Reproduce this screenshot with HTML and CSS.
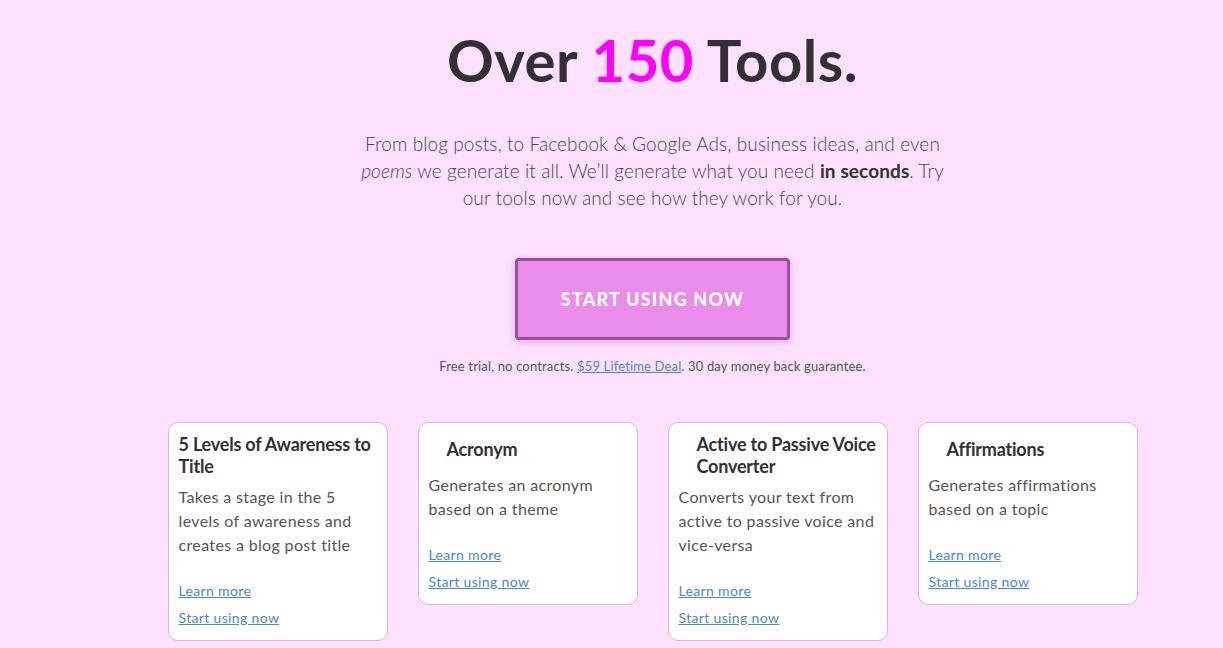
FILE: index.html
```html
<!DOCTYPE html>
<html lang="en">
<head>
<meta charset="utf-8">
<title>Over 150 Tools</title>
<link rel="stylesheet" href="styles.css">
</head>
<body>
<main class="page">
  <section class="hero">
    <h1 class="title">Over <span class="accent">150</span> Tools.</h1>
    <p class="lead">From blog posts, to Facebook &amp; Google Ads, business ideas, and even <em>poems</em> we generate it all. We’ll generate what you need <strong>in seconds</strong>. Try our tools now and see how they work for you.</p>
    <a class="cta" href="#">Start using now</a>
    <p class="fine">Free trial, no contracts. <a href="#">$59 Lifetime Deal</a>. 30 day money back guarantee.</p>
  </section>
  <section class="cards">
    <article class="card">
      <header class="card-head"><h2 class="card-title">5 Levels of Awareness to Title</h2></header>
      <p class="card-desc">Takes a stage in the 5 levels of awareness and creates a blog post title</p>
      <div class="card-links"><a href="#">Learn more</a><a href="#">Start using now</a></div>
    </article>
    <article class="card">
      <header class="card-head"><span class="icon"></span><h2 class="card-title">Acronym</h2></header>
      <p class="card-desc">Generates an acronym based on a theme</p>
      <div class="card-links"><a href="#">Learn more</a><a href="#">Start using now</a></div>
    </article>
    <article class="card">
      <header class="card-head"><span class="icon"></span><h2 class="card-title">Active to Passive Voice Converter</h2></header>
      <p class="card-desc">Converts your text from active to passive voice and vice-versa</p>
      <div class="card-links"><a href="#">Learn more</a><a href="#">Start using now</a></div>
    </article>
    <article class="card">
      <header class="card-head"><span class="icon"></span><h2 class="card-title">Affirmations</h2></header>
      <p class="card-desc">Generates affirmations based on a topic</p>
      <div class="card-links"><a href="#">Learn more</a><a href="#">Start using now</a></div>
    </article>
  </section>
</main>
</body>
</html>
```
FILE: styles.css
```css
* { box-sizing: border-box; }
html, body { margin: 0; padding: 0; }
body {
  background: #fde1fe;
  font-family: Lato, "Open Sans", sans-serif;
  color: #4a4448;
  overflow: hidden;
}
.page {
  padding-left: 82px;
}
.hero {
  display: flex;
  flex-direction: column;
  align-items: center;
  text-align: center;
  padding-top: 25px;
}
.title {
  margin: 0;
  font-size: 58px;
  line-height: 70px;
  font-weight: 700;
  color: #333033;
  letter-spacing: 0.5px;
}
.accent { color: #ff00ff; }
.lead {
  margin: 35px 0 0;
  width: 600px;
  font-size: 19px;
  line-height: 27px;
  font-weight: 300;
  color: #4d464b;
  letter-spacing: 0.1px;
}
.lead strong { font-weight: 700; color: #333033; }
.cta {
  margin-top: 47px;
  width: 275px;
  height: 82px;
  display: flex;
  align-items: center;
  justify-content: center;
  background: #ea8ce9;
  border: 3px solid #9c4f9d;
  border-radius: 4px;
  box-shadow: 0 2px 8px rgba(160, 80, 160, 0.35);
  color: #fff;
  text-decoration: none;
  text-transform: uppercase;
  font-size: 18px;
  font-weight: 900;
  letter-spacing: 1.2px;
}
.fine {
  margin: 17px 0 0;
  font-size: 13px;
  line-height: 18px;
  color: #555;
  letter-spacing: 0.15px;
}
.fine a { color: #4a86d8; }
.cards {
  display: flex;
  justify-content: center;
  align-items: flex-start;
  gap: 30px;
  margin-top: 47px;
}
.card {
  width: 220px;
  background: #fff;
  border: 1px solid #d9b7d9;
  border-radius: 10px;
  padding: 10px 10px 12px 10px;
}
.card-head {
  display: flex;
  align-items: center;
  min-height: 32px;
}
.icon {
  flex: none;
  width: 18px;
  height: 32px;
}
.card-title {
  margin: 0;
  font-size: 18px;
  line-height: 22px;
  font-weight: 700;
  color: #333033;
  letter-spacing: -0.2px;
}
.card-desc {
  margin: 8px 0 0;
  font-size: 16px;
  line-height: 24px;
  font-weight: 400;
  color: #555;
  letter-spacing: 0.35px;
}
.card-links {
  display: flex;
  flex-direction: column;
  align-items: flex-start;
  gap: 7px;
  margin-top: 24px;
}
.card-links a {
  font-size: 14px;
  line-height: 20px;
  color: #4a86d8;
  letter-spacing: 0.35px;
}
```
